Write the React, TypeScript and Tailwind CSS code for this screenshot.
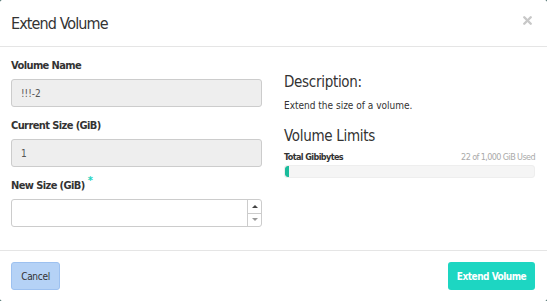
import { X } from 'lucide-react';

const font = { fontFamily: '"DejaVu Sans Condensed", "Liberation Sans", sans-serif' };

function Label({ children, required }: { children: React.ReactNode; required?: boolean }) {
  return (
    <label className="block text-[11px] font-bold tracking-[-0.6px] text-[#333] leading-[14px] mb-[6px]">
      {children}
      {required && <span className="relative -top-[5px] ml-[3px] text-[#1dd4c0] text-[11px]">*</span>}
    </label>
  );
}

function Field({ label, value }: { label: string; value: string }) {
  return (
    <div className="mb-[12px]">
      <Label>{label}</Label>
      <div className="h-[28px] rounded-[3px] border border-[#ccc] bg-[#eee] px-[9px] flex items-center text-[10px] text-[#555]">
        {value}
      </div>
    </div>
  );
}

export default function App() {
  return (
    <div className="w-[547px] h-[301px] bg-[#1b4a46] overflow-hidden" style={font}>
      <div className="w-full h-full bg-white rounded-[2px] flex flex-col">
        {/* Header */}
        <div className="h-[47px] border-b border-[#e5e5e5] flex items-center justify-between pl-[11px] pr-[13px] shrink-0">
          <h4 className="text-[16px] tracking-[-0.9px] text-[#333] leading-none mt-[2px]">Extend Volume</h4>
          <X className="w-[13px] h-[13px] text-[#c8c8c8] -mt-[5px]" strokeWidth={4.5} />
        </div>

        {/* Body */}
        <div className="flex-1 flex pl-[11px] pr-[12px] pt-[12px] gap-[22px]">
          <div className="w-[251px]">
            <Field label="Volume Name" value="!!!-2" />
            <Field label="Current Size (GiB)" value="1" />
            <div>
              <Label required>New Size (GiB)</Label>
              <div className="h-[28px] rounded-[3px] border border-[#ccc] bg-white flex">
                <div className="flex-1" />
                <div className="w-[14px] border-l border-[#ccc] flex flex-col">
                  <div className="flex-1 flex items-center justify-center border-b border-[#ccc]">
                    <span className="w-0 h-0 border-l-[3px] border-r-[3px] border-b-[3px] border-l-transparent border-r-transparent border-b-[#444]" />
                  </div>
                  <div className="flex-1 flex items-center justify-center">
                    <span className="w-0 h-0 border-l-[3px] border-r-[3px] border-t-[3px] border-l-transparent border-r-transparent border-t-[#999]" />
                  </div>
                </div>
              </div>
            </div>
          </div>

          <div className="flex-1 pt-[14px]">
            <h3 className="text-[15px] tracking-[-0.3px] text-[#333] leading-[18px] mb-[9px]">Description:</h3>
            <p className="text-[10px] text-[#333] leading-[12px] mb-[15px]">Extend the size of a volume.</p>
            <h3 className="text-[15px] tracking-[-0.3px] text-[#333] leading-[18px] mb-[7px]">Volume Limits</h3>
            <div className="flex justify-between items-end leading-[10px] mb-[3px]">
              <span className="text-[9px] font-bold tracking-[-0.6px] text-[#333]">Total Gibibytes</span>
              <span className="text-[9px] tracking-[-0.6px] text-[#aaa]">22 of 1,000 GiB Used</span>
            </div>
            <div className="h-[13px] rounded-[3px] bg-[#f5f5f5] border border-[#eee] overflow-hidden">
              <div className="h-full w-[4px] bg-[#1abc9c] rounded-l-[3px]" />
            </div>
          </div>
        </div>

        {/* Footer */}
        <div className="h-[51px] border-t border-[#e5e5e5] flex items-center justify-between pl-[11px] pr-[12px] shrink-0">
          <button className="h-[28px] w-[49px] rounded-[3px] border border-[#9dc1f0] bg-[#b5d2f6] text-[10px] tracking-[-0.3px] text-[#333]">
            Cancel
          </button>
          <button className="h-[28px] w-[87px] rounded-[3px] bg-[#1dd6c2] text-[10px] font-bold tracking-[-0.5px] text-white">
            Extend Volume
          </button>
        </div>
      </div>
    </div>
  );
}
